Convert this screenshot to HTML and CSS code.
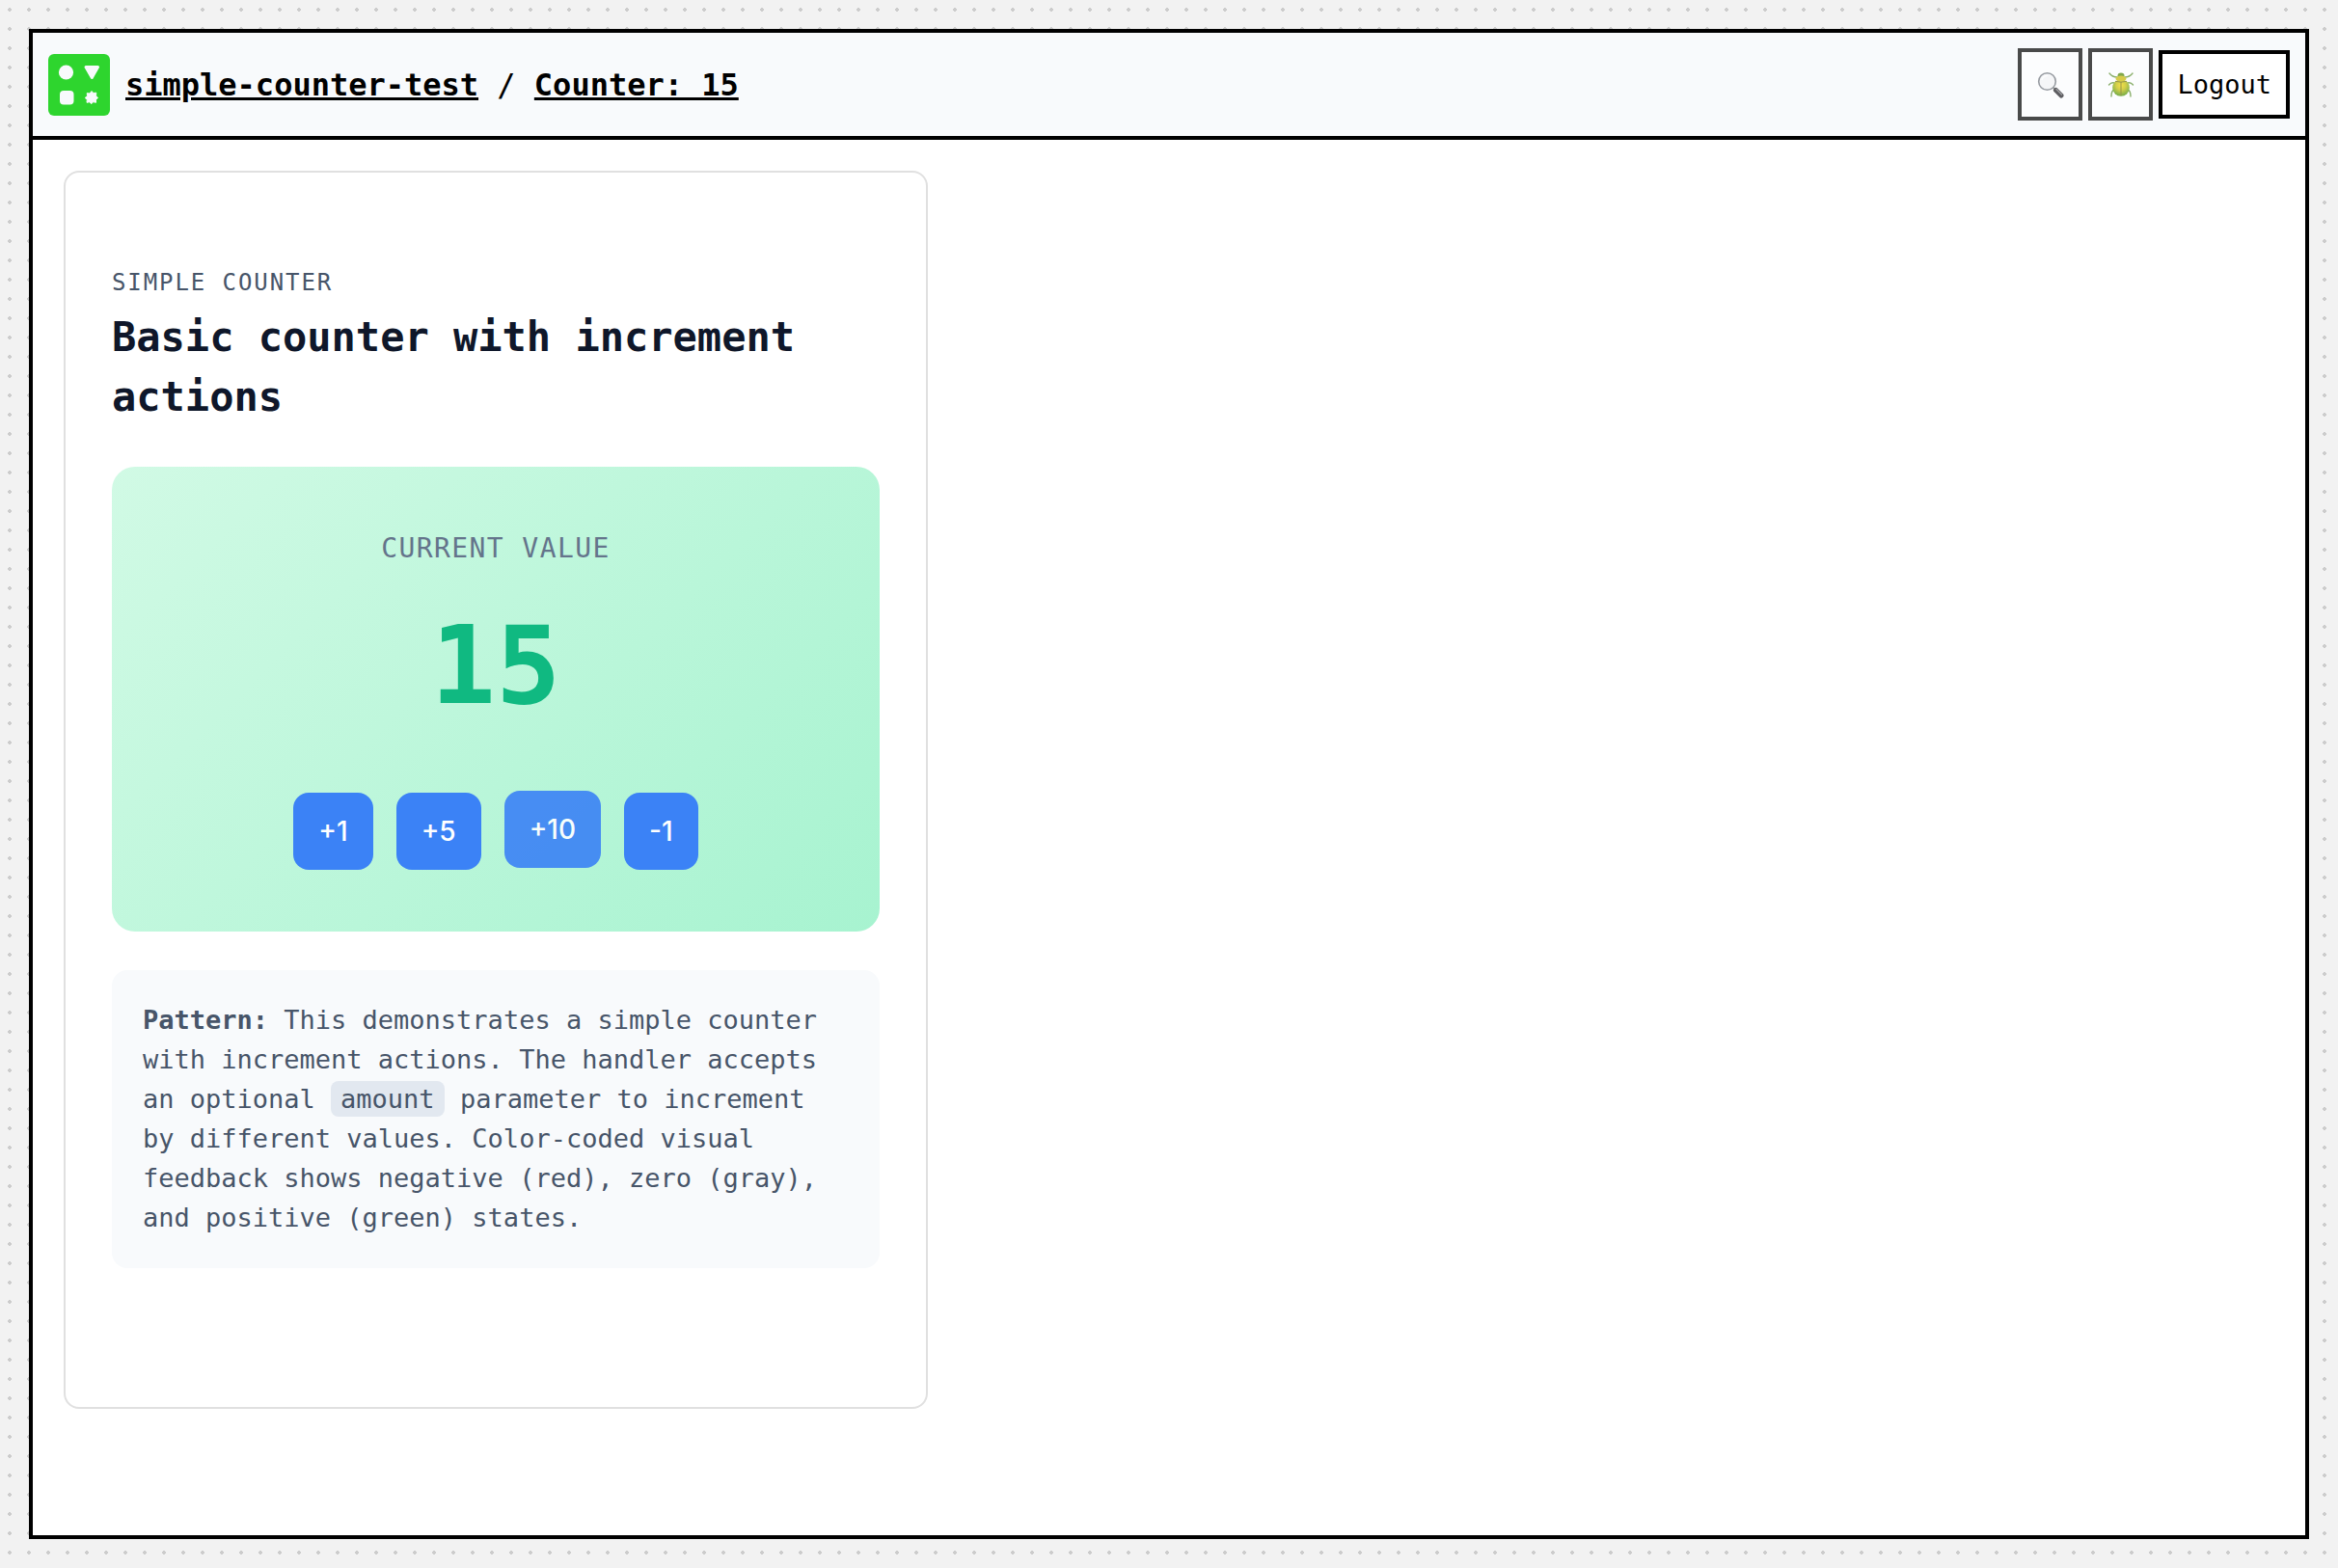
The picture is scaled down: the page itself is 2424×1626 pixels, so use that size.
FILE: index.html
```html
<!DOCTYPE html>
<html lang="en">
<head>
<meta charset="utf-8">
<meta name="viewport" content="width=device-width, initial-scale=1">
<title>Counter: 15</title>
<link rel="stylesheet" href="styles.css">
</head>
<body>
<div class="frame">
  <header class="topbar">
    <a class="logo" href="#" aria-label="Home">
      <svg viewBox="0 0 64 64" width="64" height="64" aria-hidden="true">
        <rect width="64" height="64" rx="6" fill="#2ed52e"/>
        <g fill="#f8fafc" stroke="#f8fafc" stroke-linejoin="round">
          <circle cx="18.500" cy="19" r="7.600" stroke="none"/>
          <path d="M39 13.500H51.500L45.300 24.500Z" stroke-width="3"/>
          <rect x="12" y="38" width="14.500" height="14.500" rx="4" stroke="none"/>
          <path d="M45 38.500L46.800 40.500L49.800 40.200L49.500 43.200L51.500 45.500L49.500 47.200L49.500 50.300L46.600 49.700L44.700 51.700L43 49.700L40 50.300L40.300 47.300L38.200 45.500L40.500 43.500L40.200 40.600L43 41Z" stroke-width="1"/>
        </g>
      </svg>
    </a>
    <nav class="crumbs" aria-label="Breadcrumb"><a href="#">simple-counter-test</a> / <a href="#">Counter: 15</a></nav>
    <div class="actions">
      <button class="tool" type="button" aria-label="Search">
        <svg viewBox="0 0 28 28" width="28" height="28" aria-hidden="true">
          <path d="M16 16L19 19" stroke="#777" stroke-width="2"/>
          <path d="M19.500 19.500L25 25" stroke="#1c1c20" stroke-width="5" stroke-linecap="round"/>
          <path d="M20 18.500L25.500 24" stroke="#77777c" stroke-width="1.300" stroke-linecap="round"/>
          <circle cx="10.500" cy="10.500" r="8.800" fill="#f4f5f7" stroke="#6f747c" stroke-width="1.600"/>
          <path d="M5 9A6 6 0 0 1 11 4.500" fill="none" stroke="#fff" stroke-width="1.500"/>
        </svg>
      </button>
      <button class="tool" type="button" aria-label="Debug">
        <svg viewBox="0 0 28 28" width="28" height="28" aria-hidden="true">
          <defs>
            <radialGradient id="shell" cx="50%" cy="35%" r="62%">
              <stop offset="0" stop-color="#f2d800"/>
              <stop offset="0.450" stop-color="#c4bd00"/>
              <stop offset="1" stop-color="#459000"/>
            </radialGradient>
          </defs>
          <g fill="none" stroke="#5d9130" stroke-width="1.400" stroke-linecap="round">
            <path d="M10 6Q5 6 2 2M18 6Q23 6 26 2M7 12Q4 11 1.500 14M21 12Q24 11 26.500 14M7 19Q4 20 4 26M21 19Q24 20 24 26"/>
          </g>
          <ellipse cx="14" cy="17" rx="8.800" ry="8.800" fill="url(#shell)"/>
          <ellipse cx="14" cy="4.500" rx="3.500" ry="3" fill="#4c8500"/>
          <ellipse cx="14" cy="7.500" rx="5.500" ry="3" fill="#c9b800"/>
          <path d="M8 10.300Q14 12 20 10.300M14 11V25" fill="none" stroke="#6e6a00" stroke-width="1"/>
        </svg>
      </button>
      <button class="logout" type="button">Logout</button>
    </div>
  </header>
  <main class="content">
    <article class="card">
      <header class="card-head">
        <p class="eyebrow">Simple counter</p>
        <h1 class="title">Basic counter with increment actions</h1>
      </header>
      <section class="value-panel">
        <p class="value-label">Current value</p>
        <output class="value">15</output>
        <div class="steps">
          <button class="step" type="button">+1</button>
          <button class="step" type="button">+5</button>
          <button class="step step-active" type="button">+10</button>
          <button class="step" type="button">-1</button>
        </div>
      </section>
      <p class="note"><strong>Pattern:</strong> This demonstrates a simple counter with increment actions. The handler accepts an optional <code>amount</code> parameter to increment by different values. Color-coded visual feedback shows negative (red), zero (gray), and positive (green) states.</p>
    </article>
  </main>
</div>
</body>
</html>
```
FILE: styles.css
```css
* { box-sizing: border-box; }

body {
  margin: 0;
  min-height: 100vh;
  padding: 30px;
  display: flex;
  background: #f2f2f2 radial-gradient(#ccc 2px, transparent 2px) 0 0 / 20px 20px;
  font-family: "DejaVu Sans Mono", monospace;
  color: #000;
}

p, h1 { margin: 0; }

.frame {
  flex: 1;
  min-width: 0;
  display: flex;
  flex-direction: column;
  border: 4px solid #000;
  background: #fff;
}

.topbar {
  display: flex;
  align-items: center;
  gap: 16px;
  padding: 16px;
  border-bottom: 4px solid #000;
  background: #f8fafc;
}

.logo, .logo svg { display: block; }

.crumbs { font-size: 32px; line-height: 48px; }

.crumbs a {
  color: inherit;
  font-weight: 700;
  text-decoration-thickness: 3px;
}

.actions {
  display: flex;
  align-items: center;
  gap: 6px;
  margin-left: auto;
}

.tool, .logout {
  border: 4px solid #000;
  background: #fff;
  color: #000;
  font-family: inherit;
  font-size: 27px;
}

.tool {
  display: flex;
  align-items: center;
  justify-content: center;
  width: 67px;
  height: 75px;
  padding: 0;
  opacity: 0.7;
}

.logout {
  height: 71px;
  padding: 0 15px;
}

.content { padding: 32px; }

.card {
  max-width: 896px;
  padding: 96px 48px 144px;
  border: 2px solid #e0e0e0;
  border-radius: 16px;
}

.card-head {
  display: grid;
  gap: 8px;
  margin-bottom: 41px;
}

.eyebrow {
  font-size: 24px;
  line-height: 36px;
  letter-spacing: 0.08em;
  text-transform: uppercase;
  color: #475569;
}

.title {
  font-size: 42px;
  line-height: 62px;
  color: #0f172a;
}

.value-panel {
  display: flex;
  flex-direction: column;
  align-items: center;
  padding: 64px;
  border-radius: 24px;
  background: linear-gradient(135deg, #d1fae5, #a7f3d0);
}

.value-label {
  margin-bottom: 16px;
  font-size: 28px;
  line-height: 42px;
  letter-spacing: 0.05em;
  text-transform: uppercase;
  color: #64748b;
}

.value {
  margin-bottom: 48px;
  font-size: 112px;
  font-weight: 700;
  line-height: 168px;
  color: #10b981;
}

.steps { display: flex; gap: 24px; }

.step {
  height: 80px;
  padding: 0 26px;
  border: 0;
  border-radius: 16px;
  background: #3b82f6;
  color: #fff;
  font-family: Inter, sans-serif;
  font-size: 28px;
  font-weight: 500;
}

.step-active {
  opacity: 0.9;
  transform: translateY(-2px);
}

.note {
  margin-top: 40px;
  padding: 31px 32px 32px;
  border-radius: 16px;
  background: #f8fafc;
  font-size: 27px;
  line-height: 41px;
  color: #475569;
}

.note code {
  padding: 3px 10px;
  border-radius: 8px;
  background: #e2e8f0;
  font: inherit;
}
```
